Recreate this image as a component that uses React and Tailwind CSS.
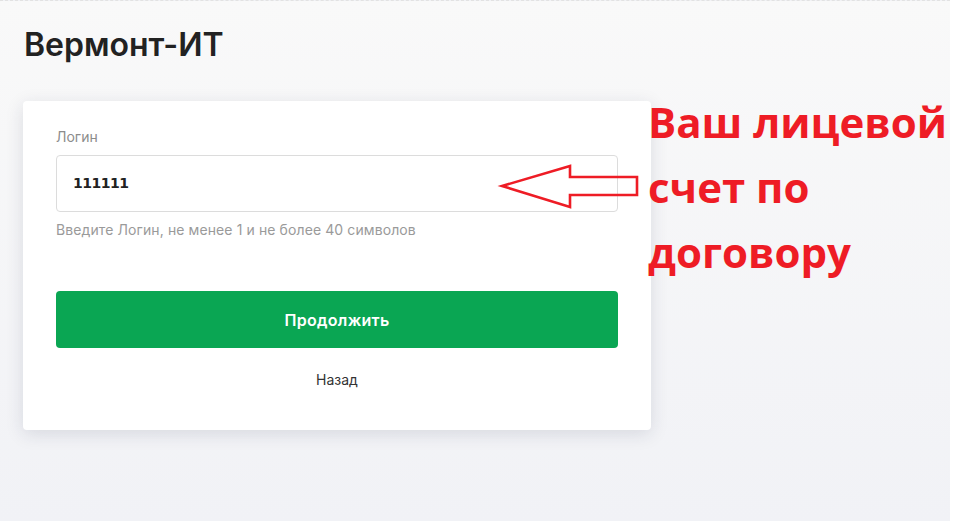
import React from "react";

function Arrow() {
  return (
    <svg
      className="absolute left-[495px] top-[160px]"
      width="150"
      height="55"
      viewBox="0 0 150 55"
      fill="none"
    >
      <polygon
        points="7,26 75,6 75,17 142,17 142,35 75,35 75,47"
        stroke="#ee1c25"
        strokeWidth="2.6"
        strokeLinejoin="miter"
      />
    </svg>
  );
}

export default function App() {
  return (
    <div className="relative flex min-h-[521px] w-full overflow-hidden font-['Inter',sans-serif]">
      <div className="w-[950px] shrink-0 border-t border-dashed border-[#e2e2e2] bg-gradient-to-b from-[#f9f9f9] to-[#f1f2f6] pl-[23px]">
        {/* Header */}
        <h1 className="pl-px pt-[24px] text-[32px] leading-[40px] font-semibold text-[#222222]">
          Вермонт-ИТ
        </h1>

        <div className="mt-[36px] flex items-start">
          {/* Login card */}
          <div className="w-[628px] shrink-0 rounded-[4px] bg-white px-[33px] pt-[27px] pb-[40px] shadow-[0_4px_18px_rgba(30,40,70,0.13)]">
            <label className="block text-[14px] leading-[18px] text-[#8c8c8c]">Логин</label>
            <div className="mt-[9px] flex h-[57px] items-center rounded-[4px] border border-[#dcdcdc] px-[16px]">
              <span className="font-['DejaVu_Sans',sans-serif] text-[14px] font-bold tracking-[-0.5px] text-[#222222]">111111</span>
            </div>
            <p className="mt-[9px] text-[14px] leading-[18px] tracking-[0.1px] text-[#9a9a9a]">
              Введите Логин, не менее 1 и не более 40 символов
            </p>
            <button className="mt-[52px] flex h-[57px] w-full items-center justify-center rounded-[4px] bg-[#0aa653] text-[16px] font-semibold tracking-[0.3px] text-white">
              Продолжить
            </button>
            <div className="mt-[22px] text-center text-[14px] leading-[20px] text-[#333333]">Назад</div>
          </div>

          {/* Annotation */}
          <div className="-mt-[12px] -ml-[3px] whitespace-nowrap font-['Open_Sans',sans-serif] text-[42px] leading-[65px] font-bold text-[#ee1c25]">
            <div>Ваш лицевой</div>
            <div>счет по</div>
            <div>договору</div>
          </div>
        </div>
      </div>
      <div className="flex-1 bg-white" />
      <Arrow />
    </div>
  );
}
